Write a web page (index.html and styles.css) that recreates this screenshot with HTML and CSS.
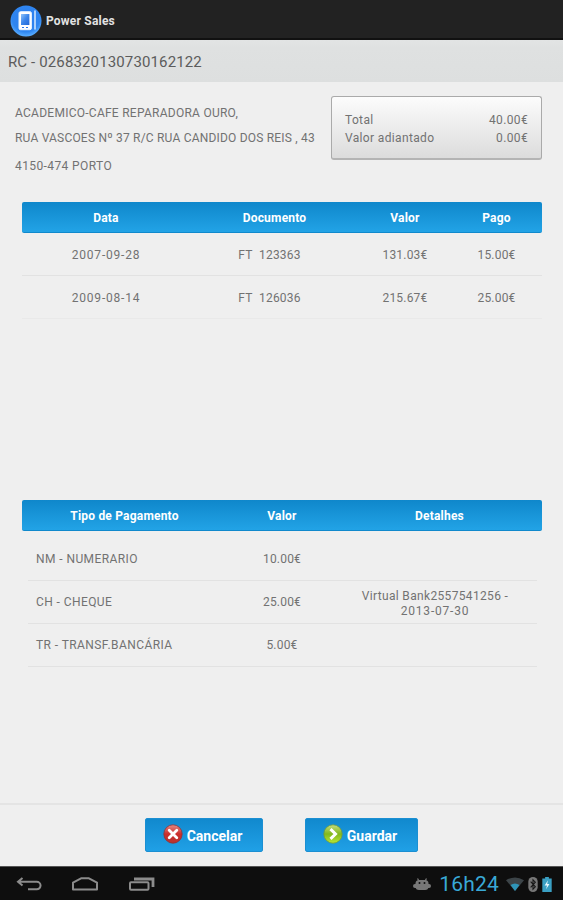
FILE: index.html
```html
<!DOCTYPE html>
<html lang="pt">
<head>
  <meta charset="UTF-8">
  <title>Power Sales</title>
  <link rel="stylesheet" href="styles.css">
</head>
<body>
  <header class="action-bar">
    <svg class="logo" viewBox="0 0 32 32">
      <defs>
        <radialGradient id="logoBg" cx="50%" cy="40%" r="60%">
          <stop offset="0" stop-color="#2c7df0"/>
          <stop offset="0.75" stop-color="#2f86f0"/>
          <stop offset="1" stop-color="#5aaeff"/>
        </radialGradient>
        <linearGradient id="screen" x1="0" y1="0" x2="1" y2="1">
          <stop offset="0" stop-color="#8fc4fb"/>
          <stop offset="0.5" stop-color="#3c86ea"/>
          <stop offset="1" stop-color="#2368d8"/>
        </linearGradient>
      </defs>
      <circle cx="16" cy="16" r="15.5" fill="url(#logoBg)"/>
      <rect x="9" y="6.7" width="12.4" height="18" rx="1.5" fill="#fff" stroke="#e9f4ff" stroke-width="1"/>
      <rect x="11" y="9" width="8.4" height="11" fill="url(#screen)"/>
      <path d="M12 22.5h2M16 22.5h2" stroke="#2c78e8" stroke-width="1.2"/>
      <path d="M25 6v18" stroke="#d6eaff" stroke-width="1.5" stroke-linecap="round"/>
    </svg>
    <span class="app-name">Power Sales</span>
  </header>

  <div class="receipt-title"><span>RC - 0268320130730162122</span></div>

  <main>
    <section class="summary">
      <div class="address">
        <p class="line-name">ACADEMICO-CAFE REPARADORA OURO,</p>
        <p class="line-street">RUA VASCOES Nº 37 R/C RUA CANDIDO DOS REIS , 43</p>
        <p class="line-zip">4150-474 PORTO</p>
      </div>
      <div class="totals">
        <div class="total-row"><span>Total</span><span>40.00€</span></div>
        <div class="total-row"><span>Valor adiantado</span><span>0.00€</span></div>
      </div>
    </section>

    <section class="documents">
      <div class="row head"><span>Data</span><span>Documento</span><span>Valor</span><span>Pago</span></div>
      <div class="row"><span class="date">2007-09-28</span><span class="doc">FT&nbsp; 123363</span><span>131.03€</span><span>15.00€</span></div>
      <div class="row"><span class="date">2009-08-14</span><span class="doc">FT&nbsp; 126036</span><span>215.67€</span><span>25.00€</span></div>
    </section>

    <section class="payments">
      <div class="row head"><span>Tipo de Pagamento</span><span>Valor</span><span>Detalhes</span></div>
      <div class="payment-list">
        <div class="row"><span class="type">NM - NUMERARIO</span><span>10.00€</span><span></span></div>
        <div class="row"><span class="type">CH - CHEQUE</span><span>25.00€</span><span class="details">Virtual Bank2557541256 -<br><span class="date">2013-07-30</span></span></div>
        <div class="row"><span class="type">TR - TRANSF.BANCÁRIA</span><span>5.00€</span><span></span></div>
      </div>
    </section>
  </main>

  <footer class="actions">
    <button class="cancel">
      <svg viewBox="0 0 20 20">
        <defs>
          <linearGradient id="red" x1="0" y1="0" x2="0" y2="1">
            <stop offset="0" stop-color="#e58a84"/>
            <stop offset="0.5" stop-color="#cc2f2c"/>
            <stop offset="1" stop-color="#b8322f"/>
          </linearGradient>
        </defs>
        <circle cx="10" cy="10" r="9.2" fill="url(#red)" stroke="#8d3438" stroke-width="0.8"/>
        <path d="M6.2 6.2l7.6 7.6M13.8 6.2l-7.6 7.6" stroke="#fff" stroke-width="2.8" stroke-linecap="round"/>
      </svg>
      <span>Cancelar</span>
    </button>
    <button class="save">
      <svg viewBox="0 0 20 20">
        <defs>
          <linearGradient id="green" x1="0" y1="0" x2="0" y2="1">
            <stop offset="0" stop-color="#c5dd80"/>
            <stop offset="0.5" stop-color="#82b81c"/>
            <stop offset="1" stop-color="#b9e636"/>
          </linearGradient>
        </defs>
        <circle cx="10" cy="10" r="9.2" fill="url(#green)" stroke="#6f9a3c" stroke-width="0.8"/>
        <path d="M7.5 5.2l5 4.8-5 4.8" fill="none" stroke="#fff" stroke-width="3"/>
      </svg>
      <span>Guardar</span>
    </button>
  </footer>

  <nav class="system-bar">
    <svg class="nav-back" viewBox="0 0 26 16">
      <path d="M6.5 2L2 5.8l4.5 3.8M2.5 5.8h18.3a3.6 3.6 0 0 1 0 7.5H12" fill="none" stroke="#8c8c8c" stroke-width="2"/>
    </svg>
    <svg class="nav-home" viewBox="0 0 28 16">
      <path d="M2 13.5V6.6L10.5 2.2h7L26 6.6v6.9z" fill="none" stroke="#8c8c8c" stroke-width="2" stroke-linejoin="round"/>
    </svg>
    <svg class="nav-recent" viewBox="0 0 28 16">
      <rect x="2" y="6.2" width="18.5" height="7.6" rx="1" fill="none" stroke="#8c8c8c" stroke-width="2"/>
      <path d="M6 3h19v8" fill="none" stroke="#8c8c8c" stroke-width="2.8"/>
    </svg>
    <div class="status">
      <svg class="android" viewBox="0 0 18 14">
        <path d="M4.5 1.5l1.5 2.5M13.5 1.5l-1.5 2.5" stroke="#777" stroke-width="1.3"/>
        <rect x="2.5" y="3" width="13" height="10" rx="3.5" fill="#777"/>
        <rect x="0" y="7" width="18" height="4" rx="2" fill="#777"/>
        <circle cx="6.5" cy="6" r="1" fill="#111"/>
        <circle cx="11.5" cy="6" r="1" fill="#111"/>
      </svg>
      <span class="clock">16h24</span>
      <svg class="wifi" viewBox="0 0 18 14">
        <path d="M0 3.2Q9-2.4 18 3.2L9 14z" fill="#3c4448"/>
        <path d="M4.5 8Q9 5 13.5 8L9 14z" fill="#2f95b8"/>
      </svg>
      <svg class="bluetooth" viewBox="0 0 10 16">
        <rect x="0" y="0" width="10" height="16" rx="5" fill="#777"/>
        <path d="M2.5 5l5 5.5L5 13V3l2.5 2.5-5 5.5" fill="none" stroke="#151515" stroke-width="1.1"/>
      </svg>
      <svg class="battery" viewBox="0 0 10 16">
        <path d="M3 0h4v1.6h3V16H0V1.6h3z" fill="#3aa0c4"/>
        <path d="M6 3.5L2.5 9H5l-1 4 3.6-5.5H5.2z" fill="#e8f8ff"/>
      </svg>
    </div>
  </nav>
</body>
</html>
```
FILE: styles.css
```css
* {
  box-sizing: border-box;
}

body {
  margin: 0;
  height: 900px;
  display: flex;
  flex-direction: column;
  overflow: hidden;
  background: #efefef;
  color: #727272;
  font-family: Roboto, "Liberation Sans", sans-serif;
  font-size: 12px;
  letter-spacing: 0.2px;
  white-space: nowrap;
}

p {
  margin: 0;
}

.action-bar {
  height: 40px;
  display: flex;
  align-items: center;
  gap: 4px;
  padding-left: 10px;
  background: #222;
  border-bottom: 2px solid #111;
}

.logo {
  width: 32px;
  height: 32px;
  margin-top: 3px;
}

.app-name {
  color: #e2e2e2;
  font-weight: bold;
  margin-top: 3px;
}

.receipt-title {
  height: 42px;
  padding: 2px 0 0 8px;
  display: flex;
  align-items: center;
  background: linear-gradient(#e2e4e4, #dfe1e1 20%, #dddfdf);
  color: #5c5c5c;
  font-size: 15px;
  letter-spacing: 0.13px;
}

main {
  flex: 1;
  display: flex;
  flex-direction: column;
}

.summary {
  display: flex;
  justify-content: space-between;
  padding: 14px 21px 0 15px;
  height: 120px;
}

.address {
  padding-top: 10px;
  line-height: 14px;
}

.line-name {
  letter-spacing: 0.26px;
}

.line-street {
  margin-top: 11px;
}

.line-zip {
  margin-top: 14px;
  letter-spacing: 0.4px;
}

.totals {
  width: 211px;
  height: 64px;
  padding: 14px 13px 0;
  border: 1px solid #aaa;
  border-bottom: 2px solid #b4b4b4;
  border-radius: 3px;
  background: linear-gradient(#fcfcfc, #dcdcdc);
  letter-spacing: 0.35px;
}

.total-row {
  display: flex;
  justify-content: space-between;
  line-height: 18px;
}

.documents,
.payments {
  margin: 0 21px 0 22px;
}

.documents {
  height: 298px;
}

.row {
  display: grid;
  align-items: center;
  height: 43px;
  border-bottom: 1px solid #e2e2e2;
  text-align: center;
}

.documents .row {
  grid-template-columns: 168px 169px 92px 91px;
  padding-top: 1px;
}

.documents .row:last-child {
  border-bottom-color: #e9e9e9;
}

.payments .row {
  grid-template-columns: 205px 110px 205px;
}

.row.head {
  height: 31px;
  padding-top: 1px;
  border-bottom: 1px solid #1089cc;
  border-radius: 2px;
  background: linear-gradient(#0f87cb, #22a3e6);
  color: #fff;
  font-weight: bold;
}

.date {
  letter-spacing: 0.8px;
}

.doc {
  position: relative;
  left: -5px;
}

.payment-list {
  margin: 0 5px 0 6px;
  padding-top: 7px;
}

.payments .payment-list .row {
  grid-template-columns: 199px 110px 200px;
}

.type {
  text-align: left;
  padding-left: 8px;
  letter-spacing: 0.42px;
}

/* two lines in a fixed height, the second one is clipped */
.details {
  align-self: start;
  height: 26px;
  margin-top: 8px;
  overflow: hidden;
  line-height: 15px;
  padding-right: 4px;
  letter-spacing: 0.34px;
}

.actions {
  height: 63px;
  display: flex;
  justify-content: center;
  gap: 42px;
  padding-top: 13px;
  border-top: 2px solid #e4e4e4;
}

button {
  height: 34px;
  display: flex;
  align-items: center;
  justify-content: center;
  gap: 4px;
  padding: 0 3px 0 0;
  border: 1px solid #1b8fd2;
  border-radius: 2px;
  background: linear-gradient(#1189ce, #20a0e6);
  color: #fff;
  font-family: inherit;
  font-size: 14px;
  font-weight: bold;
}

button svg {
  width: 20px;
  height: 20px;
  margin-top: -2px;
}

button span {
  margin-top: 1px;
}

.cancel {
  width: 118px;
}

.save {
  width: 113px;
}

.system-bar {
  height: 34px;
  display: flex;
  align-items: center;
  padding: 1px 11px 0 16px;
  background: #0e0e0e;
  border-top: 1px solid #555;
}

.nav-back {
  width: 26px;
  height: 16px;
}

.nav-home {
  width: 28px;
  height: 16px;
  margin-left: 29px;
}

.nav-recent {
  width: 28px;
  height: 16px;
  margin-left: 29px;
}

.status {
  margin-left: auto;
  display: flex;
  align-items: center;
}

.android {
  width: 18px;
  height: 14px;
}

.clock {
  margin: 0 7px 0 8px;
  color: #39a9d6;
  font-size: 21px;
}

.wifi {
  width: 18px;
  height: 14px;
}

.bluetooth {
  width: 10px;
  height: 15px;
  margin: 0 4px;
}

.battery {
  width: 10px;
  height: 15px;
}
```
